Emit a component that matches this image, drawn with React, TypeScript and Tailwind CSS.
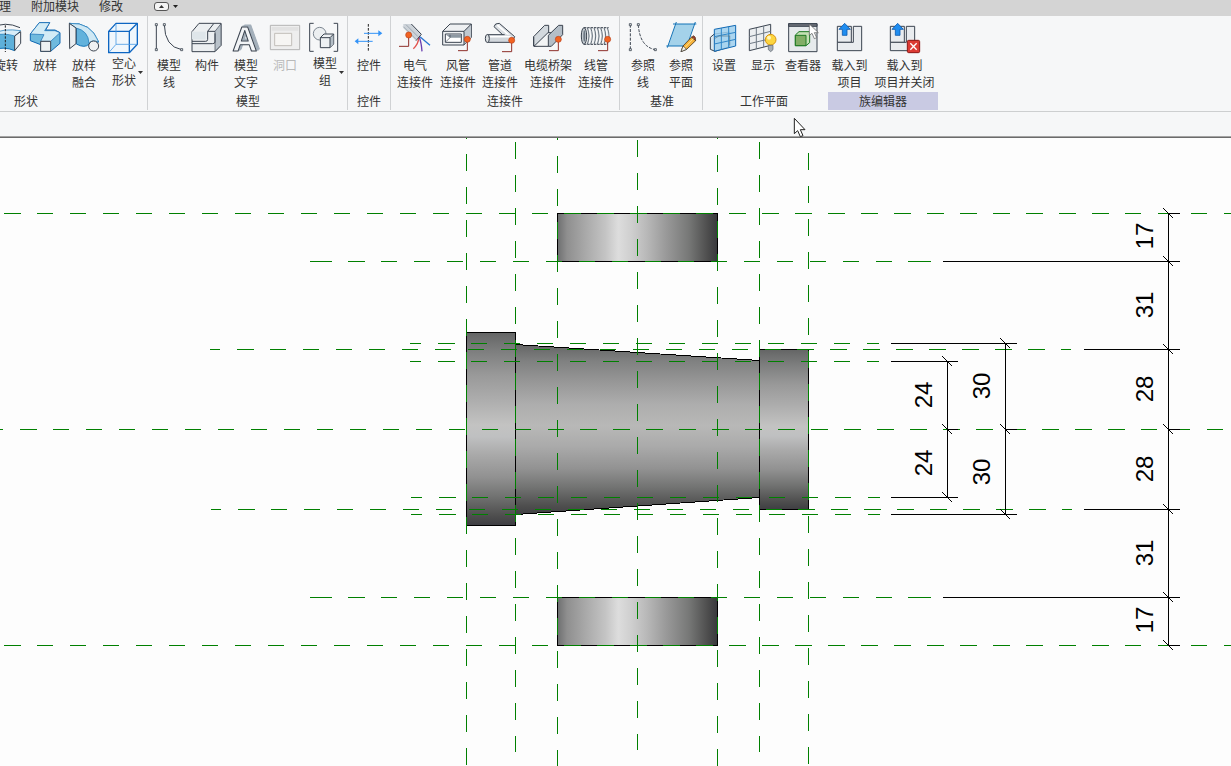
import type { ReactNode } from "react";

const INK = "#3b4450";
const RED = "#8e2f2a";

function Icon({ x, children }: { x: number; children: ReactNode }) {
  return (
    <svg
      viewBox={`${x} 66 96 96`}
      className="size-8 shrink-0 overflow-visible"
      fill="none"
      strokeWidth="3"
      strokeLinejoin="round"
      aria-hidden="true"
    >
      {children}
    </svg>
  );
}

function Node({ x, y }: { x: number; y: number }) {
  return <rect x={x - 3} y={y - 3} width="6" height="6" fill="#fff" stroke={INK} strokeWidth="2.5" />;
}

function ConnectorPin({ x, y, left }: { x: number; y: number; left: number }) {
  return (
    <>
      <path d={`M${x} ${y}V${y + 34}H${left}`} stroke={RED} />
      <circle cx={x} cy={y} r="9" fill="#f26322" stroke="#b8401a" strokeWidth="2" />
    </>
  );
}

const revolveIcon = (
  <Icon x={-30}>
    <path d="M-26 84Q15 62 60 83" stroke={INK} />
    <path d="M-24 102Q10 84 44 106L44 152Q14 138 -24 150Z" fill="#5eb0da" stroke="#1272b6" />
    <path d="M-24 102Q10 84 62 92L44 108Q14 98 -24 106Z" fill="#d8edf8" stroke="#1272b6" strokeWidth="2" />
    <path d="M44 108L62 95V130L44 152Z" fill="#eef0f2" stroke={INK} />
    <path d="M16 76V156" stroke="#222" strokeDasharray="7 4" />
  </Icon>
);

const sweepIcon = (
  <Icon x={87}>
    <path d="M91 102L118 68H149L137 90H165L180 98V130L152 154H122V134L91 122Z" fill="#6fbade" stroke="#1068b2" />
    <path d="M91 102L118 68H149L134 92H165L180 98L152 124H122L132 104Z" fill="#d3ecf6" stroke="#1068b2" strokeWidth="2" />
    <path d="M122 124H152V154H122Z" fill="#eef1f3" stroke={INK} />
  </Icon>
);

const sweptBlendIcon = (
  <Icon x={201}>
    <path d="M205 70Q270 66 293 126L264 132Q252 146 226 132V82Z" fill="#62b2dc" stroke="#1272b6" />
    <path d="M205 70Q270 66 293 126Q272 118 264 130Q262 92 225 84Z" fill="#cfe8f4" stroke="#1272b6" strokeWidth="2" />
    <path d="M205 70L225 84V131L206 146Z" fill="#e9edf0" stroke={INK} />
    <circle cx="278" cy="138" r="15" fill="#eff1f3" stroke={INK} />
  </Icon>
);

const voidIcon = (
  <Icon x={324}>
    <path d="M326 94L348 70H412V133L388 158H326Z" fill="#f0f7fc" stroke="#0d66c2" strokeWidth="4" />
    <path d="M326 94H388V158M388 94L412 70" stroke="#0d66c2" strokeWidth="4" />
    <path d="M348 72V133H410M348 133L328 156" stroke="#4d9ee4" strokeWidth="2.5" />
  </Icon>
);

const modelLineIcon = (
  <Icon x={459}>
    <path d="M469 74V149M493 74Q494 140 545 149" stroke={INK} />
    <Node x={469} y={74} />
    <Node x={469} y={149} />
    <Node x={493} y={74} />
    <Node x={545} y={149} />
  </Icon>
);

const componentIcon = (
  <Icon x={-12}>
    <path d="M-9 95L12 70H78V136L60 155H-9Z" fill="#eceff1" stroke={INK} />
    <path d="M60 94L78 71V136L60 154Z" fill="#b9c2ca" stroke={INK} strokeWidth="2" />
    <path d="M38 94H60M38 94L56 71M38 94V118Q38 124 32 124H-9M60 100V126Q60 131 52 131H-9" stroke={INK} />
    <path d="M-9 95H32V118H-9Z" fill="#dfe6ea" />
  </Icon>
);

const modelTextIcon = (
  <Icon x={105}>
    <defs>
      <filter id="extrude" x="-20%" y="-20%" width="150%" height="140%">
        <feFlood floodColor="#a3afba" result="tone" />
        <feComposite in="tone" in2="SourceAlpha" operator="in" result="side" />
        <feOffset in="side" dx="3" dy="-2" result="s1" />
        <feOffset in="side" dx="6" dy="-4" result="s2" />
        <feOffset in="side" dx="9" dy="-6" result="s3" />
        <feMerge>
          <feMergeNode in="s3" />
          <feMergeNode in="s2" />
          <feMergeNode in="s1" />
          <feMergeNode in="SourceGraphic" />
        </feMerge>
      </filter>
    </defs>
    <text
      x="149"
      y="152"
      fontFamily="Liberation Sans, sans-serif"
      fontWeight="700"
      fontSize="104"
      textAnchor="middle"
      fill="#f2f4f6"
      stroke={INK}
      filter="url(#extrude)"
    >
      A
    </text>
  </Icon>
);

const openingIcon = (
  <Icon x={219}>
    <path d="M223 76H311V149H223Z" fill="#eeeeee" stroke="#b4b4b4" />
    <path d="M227 81H307V92H227Z" fill="#e2e2e2" />
    <path d="M236 100H287V137H236Z" fill="#f6f5f3" stroke="#c2beb9" />
  </Icon>
);

const modelGroupIcon = (
  <Icon x={342}>
    <path d="M356 70H344V154H356M416 70H428V154H416" stroke={INK} />
    <circle cx="374" cy="101" r="19" fill="#eceff1" stroke="#7d8791" />
    <path d="M376 113L387 102H416V132L405 143H376Z" fill="#eef1f3" stroke={INK} />
    <path d="M405 113L415 103V132L405 142Z" fill="#b4bec6" />
    <path d="M376 113H405V143M405 113L416 102" stroke={INK} />
  </Icon>
);

const controlIcon = (
  <Icon x={474}>
    <path d="M520 72V154" stroke="#222" strokeDasharray="8 4" />
    <path d="M507 100H552M533 124H488" stroke="#3393f7" />
    <path d="M550 91L562 100L550 109ZM490 115L479 124L490 133Z" fill="#3393f7" />
  </Icon>
);

const electricalIcon = (
  <Icon x={27}>
    <path d="M88 112Q94 128 96 154" stroke="#6a3fb0" strokeWidth="4" />
    <path d="M90 110Q104 122 120 136" stroke="#2a76d2" strokeWidth="4" />
    <path d="M86 112Q86 132 70 146" stroke="#e2544e" strokeWidth="4" />
    <path d="M40 72H64L94 102L78 122L40 84Z" fill="#cdd3d9" />
    <path d="M64 72L94 103L78 122" stroke={INK} />
    <path d="M48 74L84 110M40 80L78 118" stroke="#87929d" strokeWidth="2" />
    <ConnectorPin x={56} y={105} left={27} />
  </Icon>
);

const ductIcon = (
  <Icon x={156}>
    <path d="M158 94L180 72H244V112L222 135H158Z" fill="#eef0f2" stroke={INK} />
    <path d="M222 94L243 73V112L222 134Z" fill="#c0c8cf" />
    <path d="M158 94H222V135M222 94L244 72" stroke={INK} />
    <path d="M166 102H214V127H166Z" fill="#fff" stroke={INK} />
    <path d="M168 104L180 113H213V104Z" fill="#8d98a2" />
    <path d="M180 104V113L168 125" stroke={INK} strokeWidth="2" />
    <ConnectorPin x={232} y={118} left={204} />
  </Icon>
);

const pipeIcon = (
  <Icon x={282}>
    <path d="M312 80Q314 69 328 70L374 110L366 126L342 108Z" fill="#dce0e4" stroke={INK} />
    <path d="M322 75L358 106" stroke="#fff" strokeWidth="5" />
    <path d="M292 104H364V127H292Z" fill="#d2d7dc" />
    <path d="M292 104H344M292 127H364" stroke={INK} />
    <path d="M300 110H362" stroke="#fff" strokeWidth="5" />
    <ellipse cx="292" cy="115.500" rx="6" ry="12" fill="#dfe3e6" stroke={INK} />
    <ConnectorPin x={365} y={121} left={336} />
  </Icon>
);

const trayIcon = (
  <Icon x={426}>
    <path d="M431 110L464 76H476V104L442 138H431Z" fill="#d3d9de" stroke={INK} />
    <path d="M432 139L474 98H516L475 139Z" fill="#f2f4f5" stroke={INK} />
    <path d="M475 106L506 76H518V104L484 139H475Z" fill="#b4bec7" stroke={INK} />
    <path d="M431 110V139" stroke={INK} />
    <ConnectorPin x={505} y={118} left={477} />
  </Icon>
);

const conduitIcon = (
  <Icon x={570}>
    <path d="M580 84H654V132H580Z" fill="#dfe3e6" />
    {[592, 602, 612, 622, 632, 642, 652].map((x) => (
      <path key={x} d={`M${x} 83Q${x + 10} 108 ${x} 133`} stroke="#66717c" strokeWidth="3" />
    ))}
    {[588, 598, 608, 618, 628, 638, 648].map((x) => (
      <path key={x} d={`M${x} 86Q${x + 8} 108 ${x} 130`} stroke="#fff" strokeWidth="3" />
    ))}
    <path d="M582 83H656M582 133H650" stroke={INK} strokeDasharray="7 3" />
    <ellipse cx="582" cy="108" rx="8" ry="25" fill="#c3cad0" stroke={INK} />
    <ellipse cx="583" cy="108" rx="3" ry="17" fill="#6d7883" />
    <ConnectorPin x={653} y={118} left={624} />
  </Icon>
);

const refLineIcon = (
  <Icon x={36}>
    <path d="M46 74V149M70 74Q74 140 121 149" stroke={INK} strokeDasharray="9 4" />
    <Node x={46} y={74} />
    <Node x={46} y={149} />
    <Node x={70} y={74} />
    <Node x={121} y={149} />
  </Icon>
);

const refPlaneIcon = (
  <Icon x={150}>
    <path d="M182 72H238L214 138H160Z" fill="#a4d2ea" />
    <path d="M174 72H244M154 138H210M184 66L157 143M241 66L222 120" stroke="#1272b6" />
    <path d="M198 155L204 138L230 111L242 122L215 148Z" fill="#f6b23c" stroke="#4d3a1f" strokeWidth="2.5" />
    <path d="M230 111L236 107Q243 110 242 122Z" fill="#9c3a2c" stroke="#4d3a1f" strokeWidth="2" />
    <path d="M198 155L204 138L215 148Z" fill="#f4efe4" stroke="#333" strokeWidth="2" />
    <path d="M210 142L235 116" stroke="#ffe08a" />
  </Icon>
);

const setIcon = (
  <Icon x={279}>
    <path d="M286 112L298 102L344 96V140L300 154L286 148Z" fill="#dbe7ee" stroke={INK} />
    <path d="M298 88L362 76V138L298 154Z" fill="#9fd0ef" fillOpacity="0.85" stroke="#1169b4" />
    <path d="M298 110L362 97M298 132L362 118M319 84V149M341 80V143" stroke="#2f86c8" />
    <path d="M312 108H344V136M298 116L312 108" stroke="#58788c" strokeWidth="2" />
  </Icon>
);

const showIcon = (
  <Icon x={396}>
    <path d="M403 88L467 73V136L403 152Z" fill="#eceff1" stroke={INK} />
    <path d="M403 110L467 94M403 131L467 116M424 84V147M446 78V142" stroke="#6f7a85" />
    <circle cx="467" cy="119" r="16" fill="#fcd53f" stroke="#d8940f" />
    <circle cx="462" cy="113" r="6" fill="#fff6bf" />
    <path d="M460 136H474V149L467 155L460 149Z" fill="#a8afb6" stroke="#59626b" strokeWidth="2" />
  </Icon>
);

const viewerIcon = (
  <Icon x={516}>
    <path d="M521 71H606V155H521Z" fill="#e6eaec" stroke={INK} />
    <path d="M521 71H606V79H521Z" fill="#6b7079" stroke={INK} />
    <path d="M541 105L552 95H584V128L573 137H541Z" fill="#c4e0b4" stroke="#1c7a22" />
    <path d="M541 106H573V137H541Z" fill="#82ae66" stroke="#1c7a22" />
    <path d="M583 72V106L591 100L598 116L605 113L598 98H610Z" fill="#fff" stroke="#555" strokeWidth="2" />
  </Icon>
);

const loadIcon = (
  <Icon x={162}>
    <path d="M172 79H214V127H172Z" fill="#e9ecef" stroke={INK} />
    <path d="M220 79H245V152H172V127H220Z" fill="#e9ecef" stroke={INK} />
    <path d="M194 70L211 88H201V106H187V88H177Z" fill="#1f8df0" stroke="#0d5bb0" strokeWidth="2.5" />
  </Icon>
);

const loadCloseIcon = (
  <Icon x={324}>
    <path d="M328 79H370V127H328Z" fill="#e9ecef" stroke={INK} />
    <path d="M376 79H401V152H328V127H376Z" fill="#e9ecef" stroke={INK} />
    <path d="M350 70L367 88H357V106H343V88H333Z" fill="#1f8df0" stroke="#0d5bb0" strokeWidth="2.5" />
    <rect x="379" y="121" width="37" height="37" rx="4" fill="#dc3a33" stroke="#8c1613" />
    <path d="M388 130L407 149M407 130L388 149" stroke="#fff" strokeWidth="4" />
  </Icon>
);

type Tool = { lines: string[]; icon: ReactNode; width: string; disabled?: boolean; menu?: boolean };

function ToolButton({ tool }: { tool: Tool }) {
  return (
    <button
      type="button"
      disabled={tool.disabled}
      className={`relative flex shrink-0 flex-col items-center whitespace-nowrap ${tool.width} ${
        tool.menu ? "gap-0.5" : "gap-1"
      } ${tool.disabled ? "text-[#b9b9b9]" : "text-[#333]"}`}
    >
      {tool.icon}
      <span className="flex flex-col items-center leading-[17px]">
        {tool.lines.map((line) => (
          <span key={line}>{line}</span>
        ))}
      </span>
      {tool.menu && (
        <svg viewBox="0 0 5 3" className="absolute right-0.5 bottom-4 h-[3px] w-[5px]" aria-hidden="true">
          <path d="M0 0H5L2.500 3Z" fill="#333" />
        </svg>
      )}
    </button>
  );
}

type PanelData = { title: string; className: string; active?: boolean; tools: Tool[] };

const panels: PanelData[] = [
  {
    title: "形状",
    className: "-ml-[93px] pr-0.5 border-r",
    tools: [
      { lines: ["旋转"], icon: revolveIcon, width: "w-[38px] ml-20" },
      { lines: ["放样"], icon: sweepIcon, width: "w-10" },
      { lines: ["放样", "融合"], icon: sweptBlendIcon, width: "w-[38px]" },
      { lines: ["空心", "形状"], icon: voidIcon, width: "w-[42px]", menu: true },
    ],
  },
  {
    title: "模型",
    className: "pl-0.5 pr-px border-r",
    tools: [
      { lines: ["模型", "线"], icon: modelLineIcon, width: "w-[38px]" },
      { lines: ["构件"], icon: componentIcon, width: "w-[38px]" },
      { lines: ["模型", "文字"], icon: modelTextIcon, width: "w-10" },
      { lines: ["洞口"], icon: openingIcon, width: "w-[38px]", disabled: true },
      { lines: ["模型", "组"], icon: modelGroupIcon, width: "w-[42px]", menu: true },
    ],
  },
  {
    title: "控件",
    className: "border-r",
    tools: [{ lines: ["控件"], icon: controlIcon, width: "w-[42px]" }],
  },
  {
    title: "连接件",
    className: "px-0.5 border-r",
    tools: [
      { lines: ["电气", "连接件"], icon: electricalIcon, width: "w-11" },
      { lines: ["风管", "连接件"], icon: ductIcon, width: "w-[42px]" },
      { lines: ["管道", "连接件"], icon: pipeIcon, width: "w-[42px]" },
      { lines: ["电缆桥架", "连接件"], icon: trayIcon, width: "w-[54px]" },
      { lines: ["线管", "连接件"], icon: conduitIcon, width: "w-[42px]" },
    ],
  },
  {
    title: "基准",
    className: "pl-1 pr-0.5 border-r",
    tools: [
      { lines: ["参照", "线"], icon: refLineIcon, width: "w-[38px]" },
      { lines: ["参照", "平面"], icon: refPlaneIcon, width: "w-[38px]" },
    ],
  },
  {
    title: "工作平面",
    className: "pl-0.5 pr-[5px]",
    tools: [
      { lines: ["设置"], icon: setIcon, width: "w-[38px]" },
      { lines: ["显示"], icon: showIcon, width: "w-10" },
      { lines: ["查看器"], icon: viewerIcon, width: "w-10" },
    ],
  },
  {
    title: "族编辑器",
    className: "",
    active: true,
    tools: [
      { lines: ["载入到", "项目"], icon: loadIcon, width: "w-[43px]" },
      { lines: ["载入到", "项目并关闭"], icon: loadCloseIcon, width: "w-[67px]" },
    ],
  },
];

function Panel({ panel }: { panel: PanelData }) {
  return (
    <section className={`flex shrink-0 flex-col border-[#d0d2d4] ${panel.className}`}>
      <div className="flex h-[76px] items-start pt-1.5">
        {panel.tools.map((tool) => (
          <ToolButton key={tool.lines.join("")} tool={tool} />
        ))}
      </div>
      <h2 className={`h-[18px] text-center leading-5 ${panel.active ? "bg-[#c9cae3]" : ""}`}>{panel.title}</h2>
    </section>
  );
}

type Line = { at: number; from: number; start: number; last: number; to: number; head: number; tail?: number };

/* Reference planes: `from`–`head` is the leading dash, the regular pattern runs start–last. */
const horizontalPlanes: Line[] = [
  { at: 213, from: 0, head: 0, start: 4, last: 1231, to: 1231 },
  { at: 261, from: 310, head: 332, start: 348, last: 926, to: 931, tail: 909 },
  { at: 343, from: 410, head: 421, start: 438, last: 879, to: 879 },
  { at: 349, from: 210, head: 220, start: 237, last: 1071, to: 1071 },
  { at: 361, from: 410, head: 421, start: 438, last: 879, to: 879 },
  { at: 429, from: 0, head: 3, start: 20, last: 1231, to: 1231 },
  { at: 497, from: 411, head: 422, start: 439, last: 880, to: 880 },
  { at: 509, from: 211, head: 221, start: 238, last: 1072, to: 1072 },
  { at: 514, from: 411, head: 422, start: 439, last: 880, to: 880 },
  { at: 597, from: 310, head: 332, start: 348, last: 926, to: 931, tail: 909 },
  { at: 645, from: 0, head: 0, start: 4, last: 1231, to: 1231 },
];

const verticalPlanes: Line[] = [
  { at: 466, from: 138, head: 139, start: 154, last: 766, to: 766 },
  { at: 515, from: 138, head: 138, start: 142, last: 752, to: 752 },
  { at: 557, from: 138, head: 140, start: 156, last: 766, to: 766 },
  { at: 637, from: 138, head: 138, start: 140, last: 750, to: 750 },
  { at: 717, from: 138, head: 139, start: 155, last: 766, to: 766 },
  { at: 759, from: 138, head: 138, start: 142, last: 752, to: 752 },
  { at: 808, from: 138, head: 138, start: 153, last: 766, to: 766 },
];

function horizontalPath(l: Line) {
  return `M${l.start} ${l.at + 0.5}H${l.last}`;
}

function verticalPath(l: Line) {
  return `M${l.at + 0.5} ${l.start}V${l.last}`;
}

const ticks: [number, number][] = [
  [1168, 213], [1168, 261], [1168, 349], [1168, 429], [1168, 509], [1168, 597], [1168, 645],
  [947, 361], [947, 429], [947, 497],
  [1005, 343], [1005, 429], [1005, 514],
];

const extensions: [number, number, number][] = [
  [213, 1168, 1180], [261, 943, 1180], [349, 1084, 1180], [429, 1168, 1180],
  [509, 1084, 1180], [597, 943, 1180], [645, 1168, 1180],
  [343, 891, 1017], [514, 891, 1017], [429, 1005, 1017],
  [361, 891, 958], [497, 891, 958], [429, 947, 958],
];

const dimensions: [string, number, number][] = [
  ["17", 1153, 236], ["31", 1153, 305], ["28", 1153, 389], ["28", 1153, 469], ["31", 1153, 553], ["17", 1153, 620],
  ["24", 932, 395], ["24", 932, 463],
  ["30", 990, 386], ["30", 990, 472],
];

function Drawing() {
  return (
    <svg viewBox="0 138 1231 628" className="block w-full" role="img" aria-label="参照标高">
      <defs>
        <linearGradient id="barrel" x1="0" y1="0" x2="0" y2="1">
          <stop offset="0" stopColor="#646565" />
          <stop offset="0.1" stopColor="#7e7f7f" />
          <stop offset="0.22" stopColor="#999999" />
          <stop offset="0.35" stopColor="#adadad" />
          <stop offset="0.48" stopColor="#c3c3c2" />
          <stop offset="0.54" stopColor="#bfc0c1" />
          <stop offset="0.63" stopColor="#aaaaaa" />
          <stop offset="0.75" stopColor="#919191" />
          <stop offset="0.85" stopColor="#717271" />
          <stop offset="0.95" stopColor="#4e4e4e" />
          <stop offset="1" stopColor="#3e3e42" />
        </linearGradient>
        <linearGradient id="cone" x1="0" y1="0" x2="0" y2="1">
          <stop offset="0" stopColor="#646565" />
          <stop offset="0.1" stopColor="#808181" />
          <stop offset="0.22" stopColor="#979797" />
          <stop offset="0.35" stopColor="#adadad" />
          <stop offset="0.48" stopColor="#b8b8b7" />
          <stop offset="0.6" stopColor="#aaaaaa" />
          <stop offset="0.73" stopColor="#929292" />
          <stop offset="0.84" stopColor="#727372" />
          <stop offset="0.95" stopColor="#4e4e4e" />
          <stop offset="1" stopColor="#414144" />
        </linearGradient>
        <linearGradient id="collar">
          <stop offset="0" stopColor="#6e6f70" />
          <stop offset="0.06" stopColor="#8f8f8f" />
          <stop offset="0.18" stopColor="#aaaaaa" />
          <stop offset="0.3" stopColor="#c4c4c4" />
          <stop offset="0.38" stopColor="#dddddd" />
          <stop offset="0.46" stopColor="#cfcfcf" />
          <stop offset="0.56" stopColor="#b8b8b8" />
          <stop offset="0.68" stopColor="#999999" />
          <stop offset="0.82" stopColor="#777877" />
          <stop offset="0.94" stopColor="#4d4d4d" />
          <stop offset="1" stopColor="#38383c" />
        </linearGradient>
      </defs>

      <g stroke="#000" shapeRendering="crispEdges">
        <rect x="557.500" y="213.500" width="160" height="48" fill="url(#collar)" />
        <rect x="557.500" y="597.500" width="160" height="48" fill="url(#collar)" />
        <path d="M515.500 344.500L759.500 360.500V497.500L515.500 514.500Z" fill="url(#cone)" />
        <rect x="466.500" y="332.500" width="49" height="193" fill="url(#barrel)" />
        <rect x="759.500" y="349.500" width="49" height="160" fill="url(#barrel)" />
      </g>

      <g stroke="#008000" shapeRendering="crispEdges" fill="none">
        {horizontalPlanes.map((l) => (
          <g key={l.at}>
            <path d={`M${l.from} ${l.at + 0.5}H${l.head}`} />
            <path d={horizontalPath(l)} strokeDasharray="16.500 16.470" />
            {l.tail !== undefined && <path d={`M${l.tail} ${l.at + 0.5}H${l.to}`} />}
          </g>
        ))}
        {verticalPlanes.map((l) => (
          <g key={l.at}>
            <path d={`M${l.at + 0.5} ${l.from}V${l.head}`} />
            <path d={verticalPath(l)} strokeDasharray="16.500 16.500" />
          </g>
        ))}
      </g>

      <g stroke="#000" shapeRendering="crispEdges" fill="none">
        {extensions.map(([y, x1, x2]) => (
          <path key={`${y}-${x1}`} d={`M${x1} ${y + 0.5}H${x2}`} />
        ))}
        <path d="M1168.500 213V646M947.500 361V498M1005.500 343V515" />
        {ticks.map(([x, y]) => (
          <path key={`${x}-${y}`} d={`M${x - 4.5} ${y - 4.5}L${x + 5.5} ${y + 5.5}`} />
        ))}
      </g>

      <g fill="#000" fontFamily="Liberation Sans, Arial, sans-serif" fontSize="24" textAnchor="middle">
        {dimensions.map(([value, x, y]) => (
          <text key={`${x}-${y}`} transform={`translate(${x} ${y}) rotate(-90)`}>
            {value}
          </text>
        ))}
      </g>
    </svg>
  );
}

export default function App() {
  return (
    <div className="relative flex min-h-screen flex-col overflow-hidden bg-[#fdfdfd] font-['Liberation_Sans','Noto_Sans_CJK_SC',sans-serif] text-xs text-[#333]">
      <nav className="flex h-4 shrink-0 items-start bg-[#d4d4d4] leading-[14px] whitespace-nowrap">
        <button type="button" className="-ml-[13px]">管理</button>
        <button type="button" className="ml-5">附加模块</button>
        <button type="button" className="ml-5">修改</button>
        <button type="button" aria-label="最小化功能区" className="ml-[31px] flex h-[13px] items-center gap-1">
          <svg viewBox="0 0 15 9" className="h-[9px] w-[15px]" aria-hidden="true">
            <rect x="0.500" y="0.500" width="14" height="8" rx="2.500" fill="#f4f4f4" stroke="#555" />
            <path d="M5 6L7.500 3L10 6Z" fill="#333" />
          </svg>
          <svg viewBox="0 0 5 3" className="h-[3px] w-[5px]" aria-hidden="true">
            <path d="M0 0H5L2.500 3Z" fill="#222" />
          </svg>
        </button>
      </nav>

      <header className="flex shrink-0 border-b border-[#cdcfd0] bg-[#f6f7f8] pb-px">
        {panels.map((panel) => (
          <Panel key={panel.title} panel={panel} />
        ))}
      </header>

      <div className="h-[26px] shrink-0 border-b border-[#6b6b6b] bg-[#f6f7f8]">
        <div className="h-full border-b border-[#a4a4a4]" />
      </div>

      <main>
        <Drawing />
      </main>

      <svg
        viewBox="0 0 36 60"
        className="pointer-events-none absolute top-[118px] left-[794px] h-5 w-3 overflow-visible"
        aria-hidden="true"
      >
        <path d="M1 1V47L11 38L19 56L27 53L19 35H33Z" fill="#fff" stroke="#222" strokeWidth="3" />
      </svg>
    </div>
  );
}
